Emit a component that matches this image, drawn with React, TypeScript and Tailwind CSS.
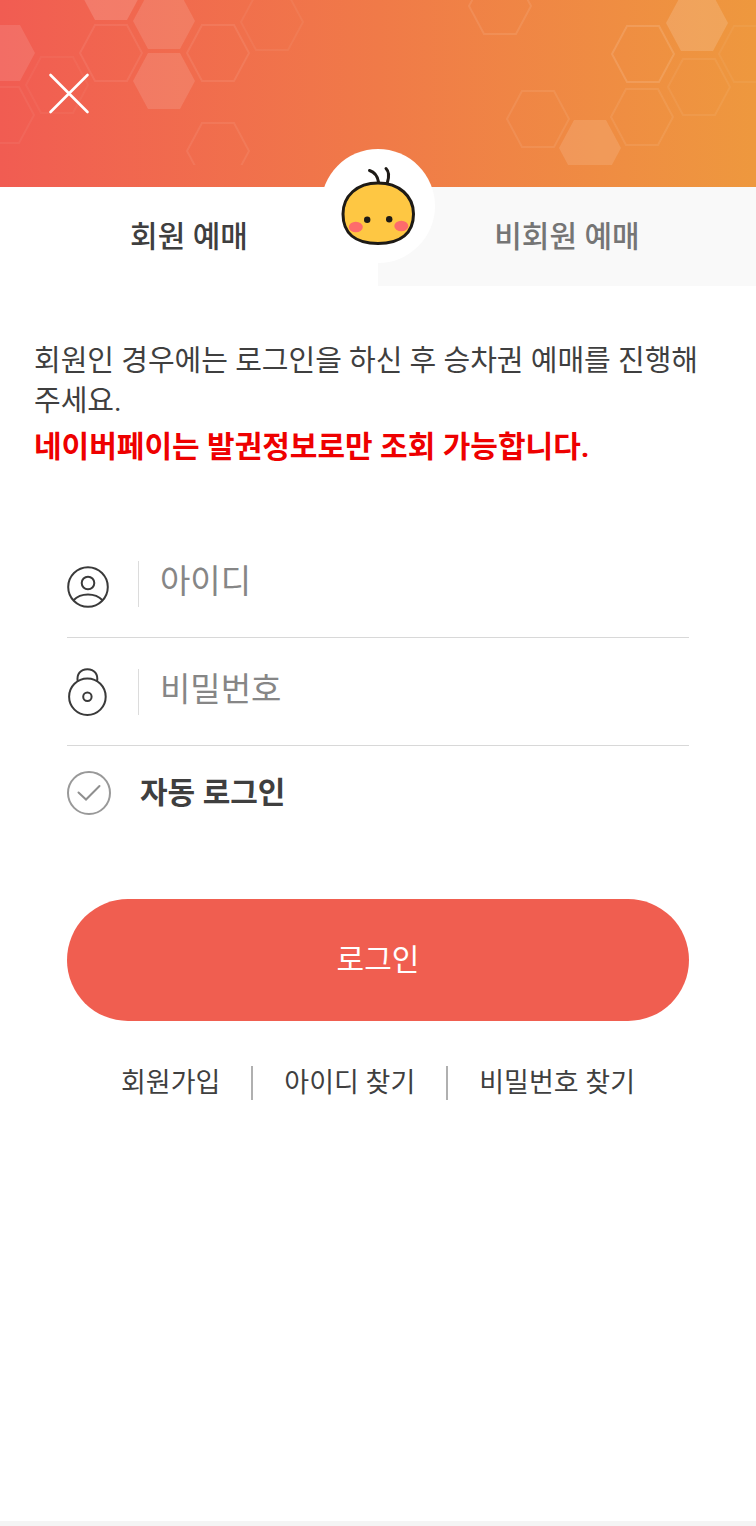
import React, { useState } from 'react';

type Tab = 'member' | 'guest';

interface Hex {
  x: number;
  y: number;
  opacity: number;
  filled?: boolean;
}

const HEXES: Hex[] = [
  { x: 4, y: 53, opacity: 0.11, filled: true },
  { x: 111, y: -8, opacity: 0.15, filled: true },
  { x: 164, y: 21, opacity: 0.12, filled: true },
  { x: 164, y: 81, opacity: 0.12, filled: true },
  { x: 697, y: 23, opacity: 0.15, filled: true },
  { x: 590, y: 148, opacity: 0.12, filled: true },
  { x: 111, y: 53, opacity: 0.07 },
  { x: 57, y: 85, opacity: 0.04 },
  { x: 3, y: 115, opacity: 0.05 },
  { x: 218, y: 53, opacity: 0.08 },
  { x: 272, y: 22, opacity: 0.05 },
  { x: 218, y: 151, opacity: 0.07 },
  { x: 500, y: 6, opacity: 0.09 },
  { x: 643, y: 54, opacity: 0.12 },
  { x: 699, y: 87, opacity: 0.06 },
  { x: 750, y: 54, opacity: 0.05 },
  { x: 538, y: 119, opacity: 0.08 },
  { x: 642, y: 117, opacity: 0.08 },
];

function HoneycombBackground() {
  return (
    <svg
      className="absolute inset-0 w-full h-full"
      viewBox="0 0 756 187"
      preserveAspectRatio="xMidYMin slice"
      fill="none"
      aria-hidden="true"
    >
      <clipPath id="honeycomb">
        <rect width="756" height="165" />
      </clipPath>
      <g clipPath="url(#honeycomb)">
        {HEXES.map(({ x, y, opacity, filled }) => (
          <path
            key={`${x}-${y}`}
            d="M-31 0L-16 -28H16L31 0L16 28H-16Z"
            transform={`translate(${x} ${y})`}
            fill={filled ? '#fff' : 'none'}
            stroke={filled ? 'none' : '#fff'}
            strokeWidth="2"
            opacity={opacity}
          />
        ))}
      </g>
    </svg>
  );
}

function Mascot() {
  return (
    <svg className="w-full h-full" viewBox="0 0 114 114" fill="none" aria-hidden="true">
      <g stroke="#1d1a16" strokeWidth="3" strokeLinecap="round">
        <path d="M48.500 21.500C53.500 23 56.500 27 57.500 33" />
        <path d="M65 19.500C68.500 23 68 28 66.500 33" />
      </g>
      <path
        d="M57 34C78 34 92.500 47 92.500 65C92.500 84 80 94.500 57 94.500C34 94.500 22 84 22 65C22 47 36 34 57 34Z"
        fill="#fec743"
        stroke="#1d1a16"
        strokeWidth="3"
      />
      <ellipse cx="34.800" cy="78" rx="7" ry="5.300" fill="#fd6b6c" />
      <ellipse cx="80.300" cy="77" rx="7" ry="5.300" fill="#fd6b6c" />
      <circle cx="46.200" cy="70.700" r="3.200" fill="#1d1a16" />
      <circle cx="68.200" cy="70.200" r="3.200" fill="#1d1a16" />
    </svg>
  );
}

function UserIcon() {
  return (
    <svg className="w-[42px] h-[42px]" viewBox="0 0 42 42" fill="none" stroke="#3a3a3a" strokeWidth="2" aria-hidden="true">
      <circle cx="21" cy="21" r="19.800" />
      <circle cx="21" cy="17" r="6.300" />
      <path d="M6.500 34.200C10 30.500 15 28.400 21 28.400C27 28.400 32 30.500 35.500 34.200" />
    </svg>
  );
}

function LockIcon() {
  return (
    <svg className="w-[42px] h-12" viewBox="0 0 42 48" fill="none" stroke="#3a3a3a" strokeWidth="2" aria-hidden="true">
      <circle cx="20.400" cy="28.700" r="18.300" />
      <circle cx="20.400" cy="28.800" r="4.200" />
      <path d="M10.800 13.500C9.300 6.500 13.500 1.200 20.400 1.200C27.300 1.200 31.500 6.500 30 13.500" />
    </svg>
  );
}

interface FieldProps {
  id: string;
  type: 'text' | 'password';
  label: string;
  icon: React.ReactNode;
}

function Field({ id, type, label, icon }: FieldProps) {
  return (
    <div className="flex items-center h-[108px] border-b border-[#d8d8d8]">
      <label htmlFor={id} className="flex items-end shrink-0 h-12" aria-label={label}>
        {icon}
      </label>
      <div className="flex flex-1 min-w-0 h-[46px] ml-[29px] border-l border-[#dcdcdc]">
        <input
          id={id}
          type={type}
          placeholder={label}
          className="w-full h-[42px] pl-[21px] bg-transparent text-[33px] leading-10 text-[#3f3f3f] placeholder:text-[#868686] placeholder:opacity-100 outline-none"
        />
      </div>
    </div>
  );
}

const LINKS = ['회원가입', '아이디 찾기', '비밀번호 찾기'];

export default function App() {
  const [tab, setTab] = useState<Tab>('member');
  const [autoLogin, setAutoLogin] = useState(false);

  const tabClass = (value: Tab) =>
    tab === value ? 'bg-white text-[#3f3f3f]' : 'bg-[#f9f9f9] text-[#757575]';

  return (
    <div className="flex flex-col min-h-screen bg-white text-[#3f3f3f] font-['Roboto','Noto_Sans_CJK_KR',sans-serif]">
      <header className="relative h-[187px] px-12 pt-[72px] bg-linear-to-r from-[#f15c52] via-[#f07a48] to-[#ee983e]">
        <HoneycombBackground />
        <button type="button" aria-label="닫기" className="relative block w-[42px] h-[42px]">
          <svg viewBox="0 0 42 42" fill="none" stroke="#fff" strokeWidth="2.600" strokeLinecap="round" aria-hidden="true">
            <path d="M2.500 3L39.500 40M39.500 3L2.500 40" />
          </svg>
        </button>
        <div className="absolute z-10 left-1/2 -bottom-[76px] w-[114px] h-[114px] -translate-x-1/2 rounded-full bg-white">
          <Mascot />
        </div>
      </header>

      <div role="tablist" className="grid grid-cols-2 h-[99px] text-[30px] leading-10 font-medium">
        <button type="button" role="tab" aria-selected={tab === 'member'} onClick={() => setTab('member')} className={tabClass('member')}>
          회원 예매
        </button>
        <button type="button" role="tab" aria-selected={tab === 'guest'} onClick={() => setTab('guest')} className={tabClass('guest')}>
          비회원 예매
        </button>
      </div>

      <main>
        <div className="px-[34px] pt-[55px] leading-10">
          <p className="text-[29px]">회원인 경우에는 로그인을 하신 후 승차권 예매를 진행해 주세요.</p>
          <p className="mt-1.5 text-[30px] font-bold text-[#ee0000]">네이버페이는 발권정보로만 조회 가능합니다.</p>
        </div>

        <form className="px-[67px] pt-[63px]" onSubmit={(e) => e.preventDefault()}>
          <Field id="user-id" type="text" label="아이디" icon={<UserIcon />} />
          <Field id="user-pw" type="password" label="비밀번호" icon={<LockIcon />} />

          <label className="flex items-center w-fit mt-[25px] gap-[29px] text-[30px] leading-10 font-bold text-[#3f3f3f]">
            <span className="relative w-11 h-11">
              <input
                type="checkbox"
                checked={autoLogin}
                onChange={(e) => setAutoLogin(e.target.checked)}
                className="peer block w-full h-full appearance-none rounded-full border-2 border-[#999] checked:border-[#f05e50]"
              />
              <svg
                className="absolute inset-0 pointer-events-none text-[#8f8f8f] peer-checked:text-[#f05e50]"
                viewBox="0 0 44 44"
                fill="none"
                stroke="currentColor"
                strokeWidth="2"
                strokeLinecap="round"
                aria-hidden="true"
              >
                <path d="M11.500 21.500L19 28.500L32.500 15" />
              </svg>
            </span>
            자동 로그인
          </label>

          <button type="submit" className="block w-full h-[122px] mt-[84px] rounded-full bg-[#f05e50] text-[30px] leading-10 text-white">
            로그인
          </button>
        </form>

        <nav className="flex justify-center mt-[45px] text-[27px] leading-[34px]">
          {LINKS.map((link, i) => (
            <React.Fragment key={link}>
              {i > 0 && <span className="w-0.5 h-[34px] mx-[31px] bg-[#b0b0b0]" />}
              <a href="#">{link}</a>
            </React.Fragment>
          ))}
        </nav>
      </main>

      <footer className="h-[5px] mt-auto bg-[#f4f4f4]" />
    </div>
  );
}
